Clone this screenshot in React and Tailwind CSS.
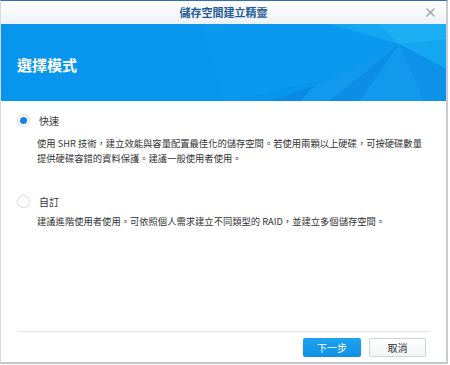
import React from "react";

const FONT = { fontFamily: '"Noto Sans CJK TC", "Noto Sans", sans-serif' };

function HeaderArt() {
  return (
    <svg
      className="absolute inset-0 h-full w-full"
      viewBox="0 0 447 77"
      preserveAspectRatio="none"
    >
      <rect width="447" height="77" fill="#0895ed" />
      <polygon points="200,0 447,0 447,25 235,77 225,77" fill="#0b99ef" />
      <polygon points="330,0 447,0 447,45 400,20" fill="#15a6f2" />
      <polygon points="380,0 447,0 447,15 400,20" fill="#1eaef4" />
      <polygon points="400,20 447,45 447,77 425,77" fill="#0d92e8" />
      <polygon points="315,62 400,20 425,77 300,77" fill="#1199ec" />
      <polygon points="270,77 315,62 300,77" fill="#0a8ae2" />
      <polygon points="330,77 400,20 360,77" fill="#0c8ee6" />
    </svg>
  );
}

function Radio({ checked }) {
  return (
    <span className="flex h-[13px] w-[13px] items-center justify-center rounded-full border border-[#d4d8dd] bg-white">
      {checked && <span className="h-[7px] w-[7px] rounded-full bg-[#1382e0]" />}
    </span>
  );
}

export default function App() {
  return (
    <div className="h-[365px] w-[450px] bg-white" style={FONT}>
      <div className="flex h-[364px] w-[448px] flex-col border-l border-r-2 border-b-2 border-t border-l-[#d8dbde] border-r-[#c9cdd1] border-b-[#c3c7cb] border-t-[#2f6fb6] bg-white">
        {/* title bar */}
        <div className="relative flex h-[23px] items-center justify-center bg-gradient-to-b from-white to-[#eef1f4]">
          <span className="text-[11px] font-bold text-[#1f5a97]">儲存空間建立精靈</span>
          <svg className="absolute right-[11px] top-[7px]" width="9" height="9" viewBox="0 0 9 9">
            <path d="M0.5 0.5 L8.5 8.5 M8.5 0.5 L0.5 8.5" stroke="#9aa0a6" strokeWidth="1.2" />
          </svg>
        </div>

        {/* blue header */}
        <div className="relative flex h-[77px] items-center overflow-hidden px-[16px] pt-[6px]">
          <HeaderArt />
          <span className="relative text-[15px] font-bold text-white">選擇模式</span>
        </div>

        {/* body */}
        <div className="flex flex-1 flex-col px-[16px] pt-[12px]">
          <div className="flex items-center gap-[9px]">
            <Radio checked />
            <span className="text-[10px] text-[#333]">快速</span>
          </div>
          <p className="mt-[8px] whitespace-nowrap pl-[20px] text-[9.3px] leading-[15px] text-[#333]">
            使用 SHR 技術，建立效能與容量配置最佳化的儲存空間。若使用兩顆以上硬碟，可按硬碟數量
            <br />
            提供硬碟容錯的資料保護。建議一般使用者使用。
          </p>

          <div className="mt-[28px] flex items-center gap-[9px]">
            <Radio />
            <span className="text-[10px] text-[#333]">自訂</span>
          </div>
          <p className="mt-[5px] whitespace-nowrap pl-[20px] text-[9.3px] leading-[15px] text-[#333]">
            建議進階使用者使用。可依照個人需求建立不同類型的 RAID，並建立多個儲存空間。
          </p>

          <div className="mt-auto border-t border-[#e3e6e9]" />
          <div className="flex justify-end gap-[8px] pb-[5px] pr-[4px] pt-[6px]">
            <button className="h-[19px] w-[58px] rounded-[2px] bg-gradient-to-b from-[#1ea2f0] to-[#1190e4] text-[10px] text-white">
              下一步
            </button>
            <button className="h-[19px] w-[57px] rounded-[2px] border border-[#cfd4d9] bg-gradient-to-b from-white to-[#f1f3f5] text-[10px] text-[#333]">
              取消
            </button>
          </div>
        </div>
      </div>
    </div>
  );
}
